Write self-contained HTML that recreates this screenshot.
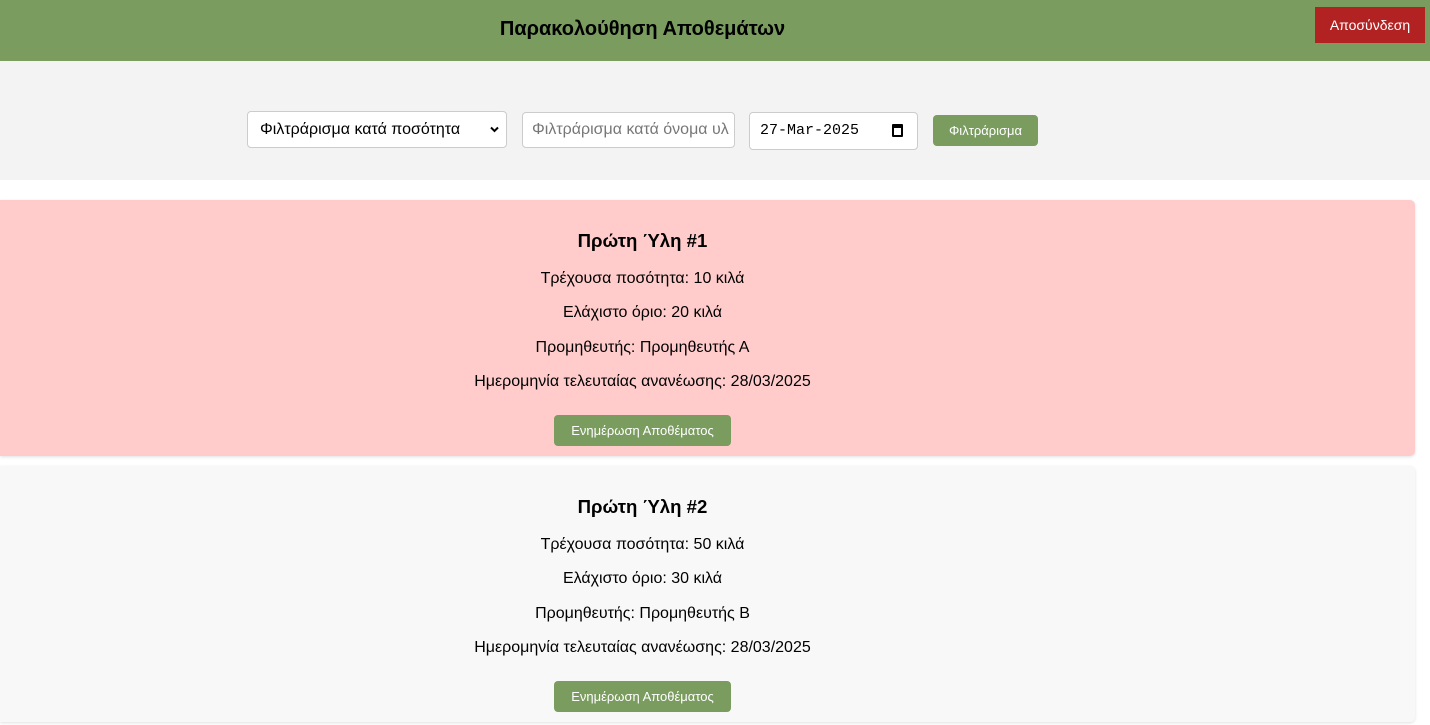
<!DOCTYPE html>
<html><head><meta charset="utf-8"><style>
*{box-sizing:border-box}
body{margin:0;width:1430px;height:725px;overflow:hidden;background:#fff;font-family:"Liberation Sans",Arial,sans-serif;position:relative}
.hdr{position:absolute;left:0;top:0;width:1430px;height:61px;background:#7a9c5f}
.hdr h1{position:absolute;left:0;width:1285px;top:18px;margin:0;text-align:center;font-size:20px;font-weight:bold;color:#000}
.out{position:absolute;left:1315px;top:7px;width:110px;height:36px;background:#b22222;color:#fff;font-size:14px;text-align:center;line-height:36px}
.flt{position:absolute;left:0;top:61px;width:1430px;height:119px;background:#f3f3f3}
.f{position:absolute;background:#fff;border:1px solid #ccc;border-radius:4px;font-size:16px}
.btn{position:absolute;background:#7a9c5f;color:#fff;border-radius:4px;font-size:13px;text-align:center}
.card{position:absolute;left:0;width:1415px;height:256px;border-radius:0 5px 5px 0;box-shadow:0 1px 3px rgba(0,0,0,.12)}
.card .in{position:absolute;left:0;width:1285px;top:0;text-align:center;font-size:16px}
.card h2{margin:30px 0 0;font-size:18.6px;font-weight:bold;height:38px}
.card p{margin:0;height:34.3px;line-height:20px;padding-top:1px}
.card .btn{position:absolute;left:554px;top:215px;width:177px;height:31px;line-height:31px}
</style></head><body>
<div class="hdr"><h1>Παρακολούθηση Αποθεμάτων</h1><div class="out">Αποσύνδεση</div></div>
<div class="flt">
<div class="f" style="left:247px;top:50px;width:260px;height:37px;line-height:35px;padding-left:12px">Φιλτράρισμα κατά ποσότητα<svg style="position:absolute;left:242px;top:14px" width="9" height="7" viewBox="0 0 9 7"><path d="M1 1.5L4.5 5L8 1.5" stroke="#000" stroke-width="2" fill="none"/></svg></div>
<div class="f" style="left:522px;top:51px;width:213px;height:36px;line-height:34px;padding-left:9px;color:#777;overflow:hidden;white-space:nowrap">Φιλτράρισμα κατά όνομα υλ</div>
<div class="f" style="left:749px;top:51px;width:169px;height:38px;line-height:36px;padding-left:10px;font-family:'Liberation Mono',monospace;font-size:15px">27-Mar-2025<span style="position:absolute;left:142px;top:11px;width:11px;height:13px;border:2px solid #000;border-top-width:4px;border-radius:1px"></span></div>
<div class="btn" style="left:933px;top:54px;width:105px;height:31px;line-height:31px">Φιλτράρισμα</div>
</div>
<div class="card" style="top:200px;background:#ffcccb"><div class="in">
<h2>Πρώτη Ύλη #1</h2><p>Τρέχουσα ποσότητα: 10 κιλά</p><p>Ελάχιστο όριο: 20 κιλά</p><p>Προμηθευτής: Προμηθευτής Α</p><p>Ημερομηνία τελευταίας ανανέωσης: 28/03/2025</p></div>
<div class="btn">Ενημέρωση Αποθέματος</div></div>
<div class="card" style="top:466px;background:#f8f8f8"><div class="in">
<h2>Πρώτη Ύλη #2</h2><p>Τρέχουσα ποσότητα: 50 κιλά</p><p>Ελάχιστο όριο: 30 κιλά</p><p>Προμηθευτής: Προμηθευτής Β</p><p>Ημερομηνία τελευταίας ανανέωσης: 28/03/2025</p></div>
<div class="btn">Ενημέρωση Αποθέματος</div></div>
</body></html>
